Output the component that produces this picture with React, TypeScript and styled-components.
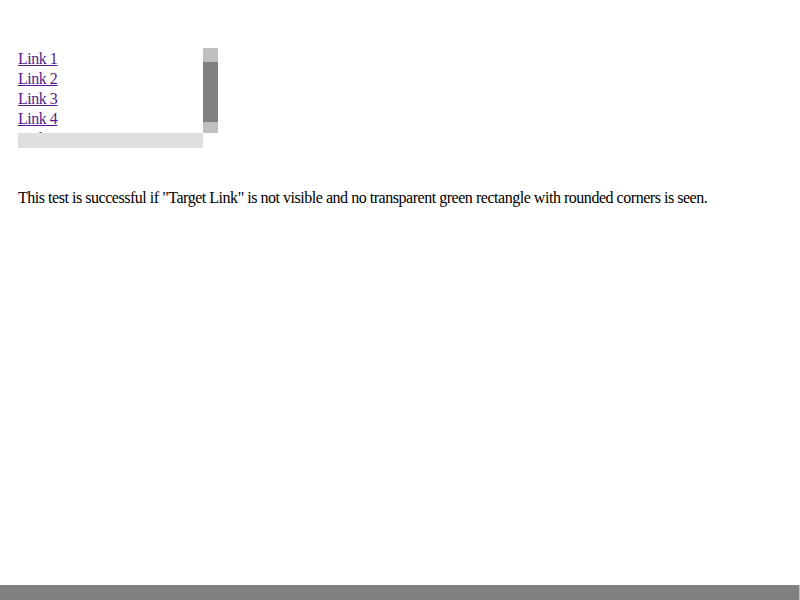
import React from "react";
import styled, { createGlobalStyle } from "styled-components";

const Global = createGlobalStyle`
  html, body { margin: 0; padding: 0; background: #fff; }
  body { font-family: "Liberation Serif", "Times New Roman", serif; font-size: 16px; letter-spacing: -0.47px; color: #000; overflow: hidden; }
`;

const Page = styled.div`
  height: 600px;
  display: flex;
  flex-direction: column;
`;

const Main = styled.main`
  flex: 1;
  padding: 48px 18px 0;
`;

const ScrollFrame = styled.div`
  display: grid;
  grid-template-columns: 185px 15px;
  grid-template-rows: 85px 15px;
  width: 200px;
`;

const Viewport = styled.div`
  overflow: hidden;
`;

const LinkList = styled.div`
  display: flex;
  flex-direction: column;
  line-height: 20px;
  padding-top: 1px;
`;

const Anchor = styled.a`
  color: #551a8b;
  text-decoration: underline;
  align-self: flex-start;
`;

const Spacer = styled.div`
  height: 200px;
`;

const VTrack = styled.div`
  background: #c0c0c0;
  display: flex;
  flex-direction: column;
  padding-top: 14px;
`;

const VThumb = styled.div`
  height: 60px;
  background: #808080;
`;

const HTrack = styled.div`
  background: #dfdfdf;
`;

const Corner = styled.div`
  background: #fff;
`;

const Note = styled.p`
  margin: 41px 0 0;
  line-height: 18px;
`;

const PageScrollbar = styled.div`
  height: 15px;
  background: #808080;
  border-right: 1px solid #c0c0c0;
  box-sizing: border-box;
`;

export default function App() {
  const links = ["Link 1", "Link 2", "Link 3", "Link 4", "Link 5", "Link 6"];
  return (
    <>
      <Global />
      <Page>
        <Main>
          <ScrollFrame>
            <Viewport>
              <LinkList>
                {links.map((l) => (
                  <Anchor key={l} href="#">{l}</Anchor>
                ))}
                <Spacer />
                <Anchor href="#">Target Link</Anchor>
              </LinkList>
            </Viewport>
            <VTrack>
              <VThumb />
            </VTrack>
            <HTrack />
            <Corner />
          </ScrollFrame>
          <Note>
            This test is successful if "Target Link" is not visible and no transparent green rectangle with rounded corners is seen.
          </Note>
        </Main>
        <PageScrollbar />
      </Page>
    </>
  );
}
